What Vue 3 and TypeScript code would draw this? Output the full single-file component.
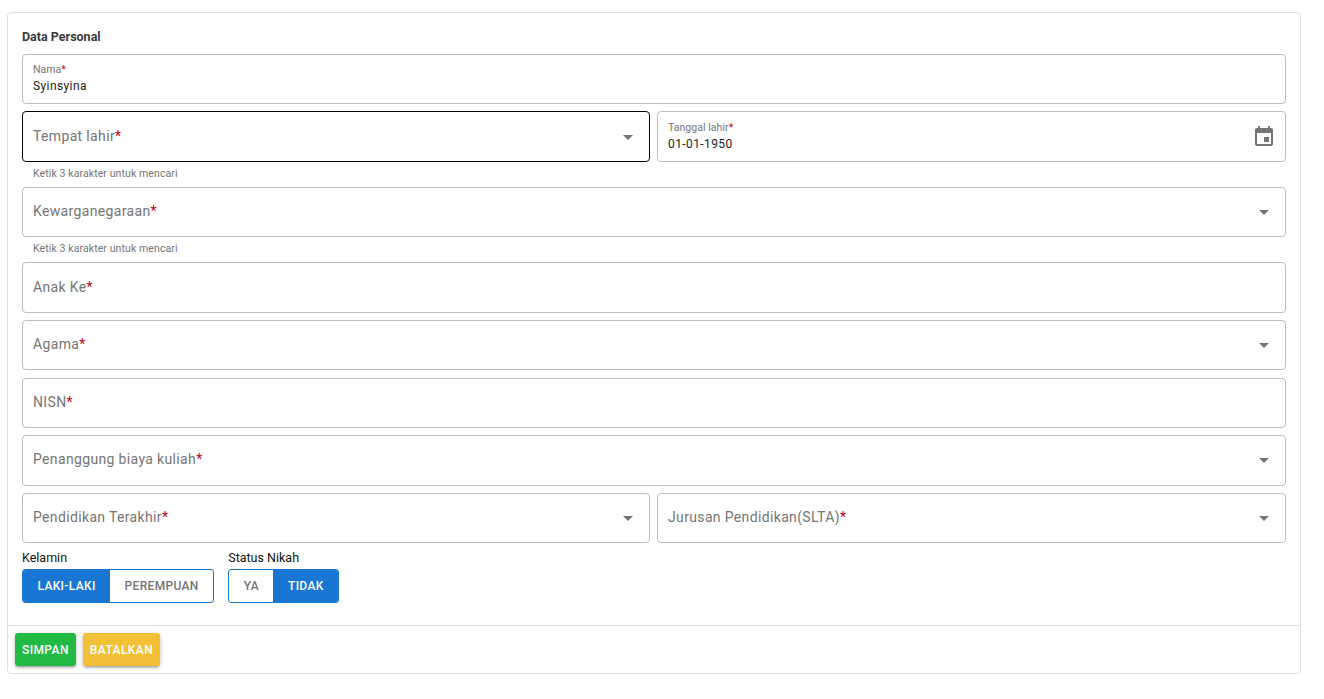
<script setup lang="ts">
interface Field { label: string; value?: string; arrow?: boolean; icon?: boolean; focus?: boolean; hint?: string }
const rows: Field[][] = [
  [{ label: 'Nama', value: 'Syinsyina' }],
  [
    { label: 'Tempat lahir', arrow: true, focus: true, hint: 'Ketik 3 karakter untuk mencari' },
    { label: 'Tanggal lahir', value: '01-01-1950', icon: true },
  ],
  [{ label: 'Kewarganegaraan', arrow: true, hint: 'Ketik 3 karakter untuk mencari' }],
  [{ label: 'Anak Ke' }],
  [{ label: 'Agama', arrow: true }],
  [{ label: 'NISN' }],
  [{ label: 'Penanggung biaya kuliah', arrow: true }],
  [
    { label: 'Pendidikan Terakhir', arrow: true },
    { label: 'Jurusan Pendidikan(SLTA)', arrow: true },
  ],
]
</script>

<template>
  <div class="page">
    <div class="card">
      <div class="body">
        <div class="title">Data Personal</div>
        <div class="form">
          <div v-for="(row, i) in rows" :key="i" class="row">
            <div v-for="f in row" :key="f.label" class="col">
              <div class="box" :class="{ focus: f.focus }">
                <div class="inner">
                  <template v-if="f.value">
                    <div class="small">{{ f.label }}<span class="req">*</span></div>
                    <div class="value">{{ f.value }}</div>
                  </template>
                  <div v-else class="big">{{ f.label }}<span class="req">*</span></div>
                </div>
                <svg v-if="f.arrow" class="arrow" viewBox="0 0 24 24" width="24" height="24"><path d="M7 10l5 5 5-5z" /></svg>
                <svg v-if="f.icon" class="cal" viewBox="0 0 24 24" width="24" height="24"><path d="M17 12h-5v5h5v-5zM16 1v2H8V1H6v2H5c-1.11 0-1.99.9-1.99 2L3 19c0 1.1.89 2 2 2h14c1.1 0 2-.9 2-2V5c0-1.1-.9-2-2-2h-1V1h-2zm3 18H5V8h14v11z" /></svg>
              </div>
              <div v-if="f.hint" class="hint">{{ f.hint }}</div>
            </div>
          </div>
        </div>
        <div class="toggles">
          <div>
            <div class="tlabel">Kelamin</div>
            <div class="toggle">
              <span class="opt on">LAKI-LAKI</span>
              <span class="opt">PEREMPUAN</span>
            </div>
          </div>
          <div>
            <div class="tlabel">Status Nikah</div>
            <div class="toggle">
              <span class="opt">YA</span>
              <span class="opt on">TIDAK</span>
            </div>
          </div>
        </div>
      </div>
      <div class="actions">
        <button class="btn green">SIMPAN</button>
        <button class="btn yellow">BATALKAN</button>
      </div>
    </div>
  </div>
</template>

<style>
html, body { margin: 0; background: #fff; }
</style>

<style scoped>
.page {
  padding: 12px 23px 25px 7px;
  font-family: Roboto, "Liberation Sans", sans-serif;
  color: rgba(0, 0, 0, 0.87);
}
.card {
  border: 1px solid #e0e0e0;
  border-radius: 4px;
  height: 662px;
  box-sizing: border-box;
  display: flex;
  flex-direction: column;
}
.body { flex: 1; padding: 16px 14px 0; }
.title {
  font-size: 12.5px;
  font-weight: 700;
  line-height: 16px;
  color: #3a3a3a;
  margin-bottom: 8.8px;
}
.form { display: flex; flex-direction: column; gap: 7.16px; }
.row { display: flex; gap: 7px; }
.col { flex: 1; min-width: 0; }
.col:first-child:not(:last-child) { flex: 0 0 628px; }
.box {
  height: 50.41px;
  box-sizing: border-box;
  border: 1px solid #bdbdbd;
  border-radius: 4px;
  display: flex;
  align-items: center;
  padding: 0 9px 0 10px;
}
.box.focus { border-color: #000; }
.inner { flex: 1; min-width: 0; }
.small {
  font-size: 10.5px;
  line-height: 12px;
  letter-spacing: 0.05px;
  color: #757575;
  margin-bottom: 2px;
}
.value { font-size: 12px; line-height: 16px; letter-spacing: 0.4px; color: #1d1d1d; }
.big { font-size: 14px; line-height: 20px; letter-spacing: 0.35px; color: #757575; transform: translateY(-1px); }
.req { color: #c10015; }
.arrow { fill: #757575; flex: none; }
.cal { fill: #757575; flex: none; }
.hint {
  font-size: 10.5px;
  line-height: 12px;
  letter-spacing: 0.1px;
  color: #757575;
  padding: 6px 11px 0;
  height: 18px;
  box-sizing: border-box;
}
.toggles { display: flex; gap: 14px; margin-top: 7px; }
.tlabel { font-size: 12.5px; line-height: 16px; color: #111; margin-bottom: 3px; }
.toggle {
  display: inline-flex;
  height: 34px;
  box-sizing: border-box;
  border: 1px solid #1976d2;
  border-radius: 3px;
  overflow: hidden;
}
.opt {
  padding: 0 14.5px;
  font-size: 12px;
  font-weight: 500;
  letter-spacing: 0.33px;
  display: flex;
  align-items: center;
  color: #757575;
}
.opt.on { background: #1976d2; color: #fff; }
.actions {
  border-top: 1px solid #e0e0e0;
  height: 48px;
  box-sizing: border-box;
  padding: 7px;
  display: flex;
  gap: 7px;
  align-items: flex-start;
}
.btn {
  height: 33px;
  border: 0;
  border-radius: 3px;
  padding: 0 7px;
  font-family: inherit;
  font-size: 12px;
  font-weight: 500;
  letter-spacing: 0.4px;
  color: #fff;
  box-shadow: 0 1px 5px rgba(0, 0, 0, 0.2), 0 2px 2px rgba(0, 0, 0, 0.14), 0 3px 1px -2px rgba(0, 0, 0, 0.12);
}
.green { background: #21ba45; }
.yellow { background: #f2c037; }
</style>
